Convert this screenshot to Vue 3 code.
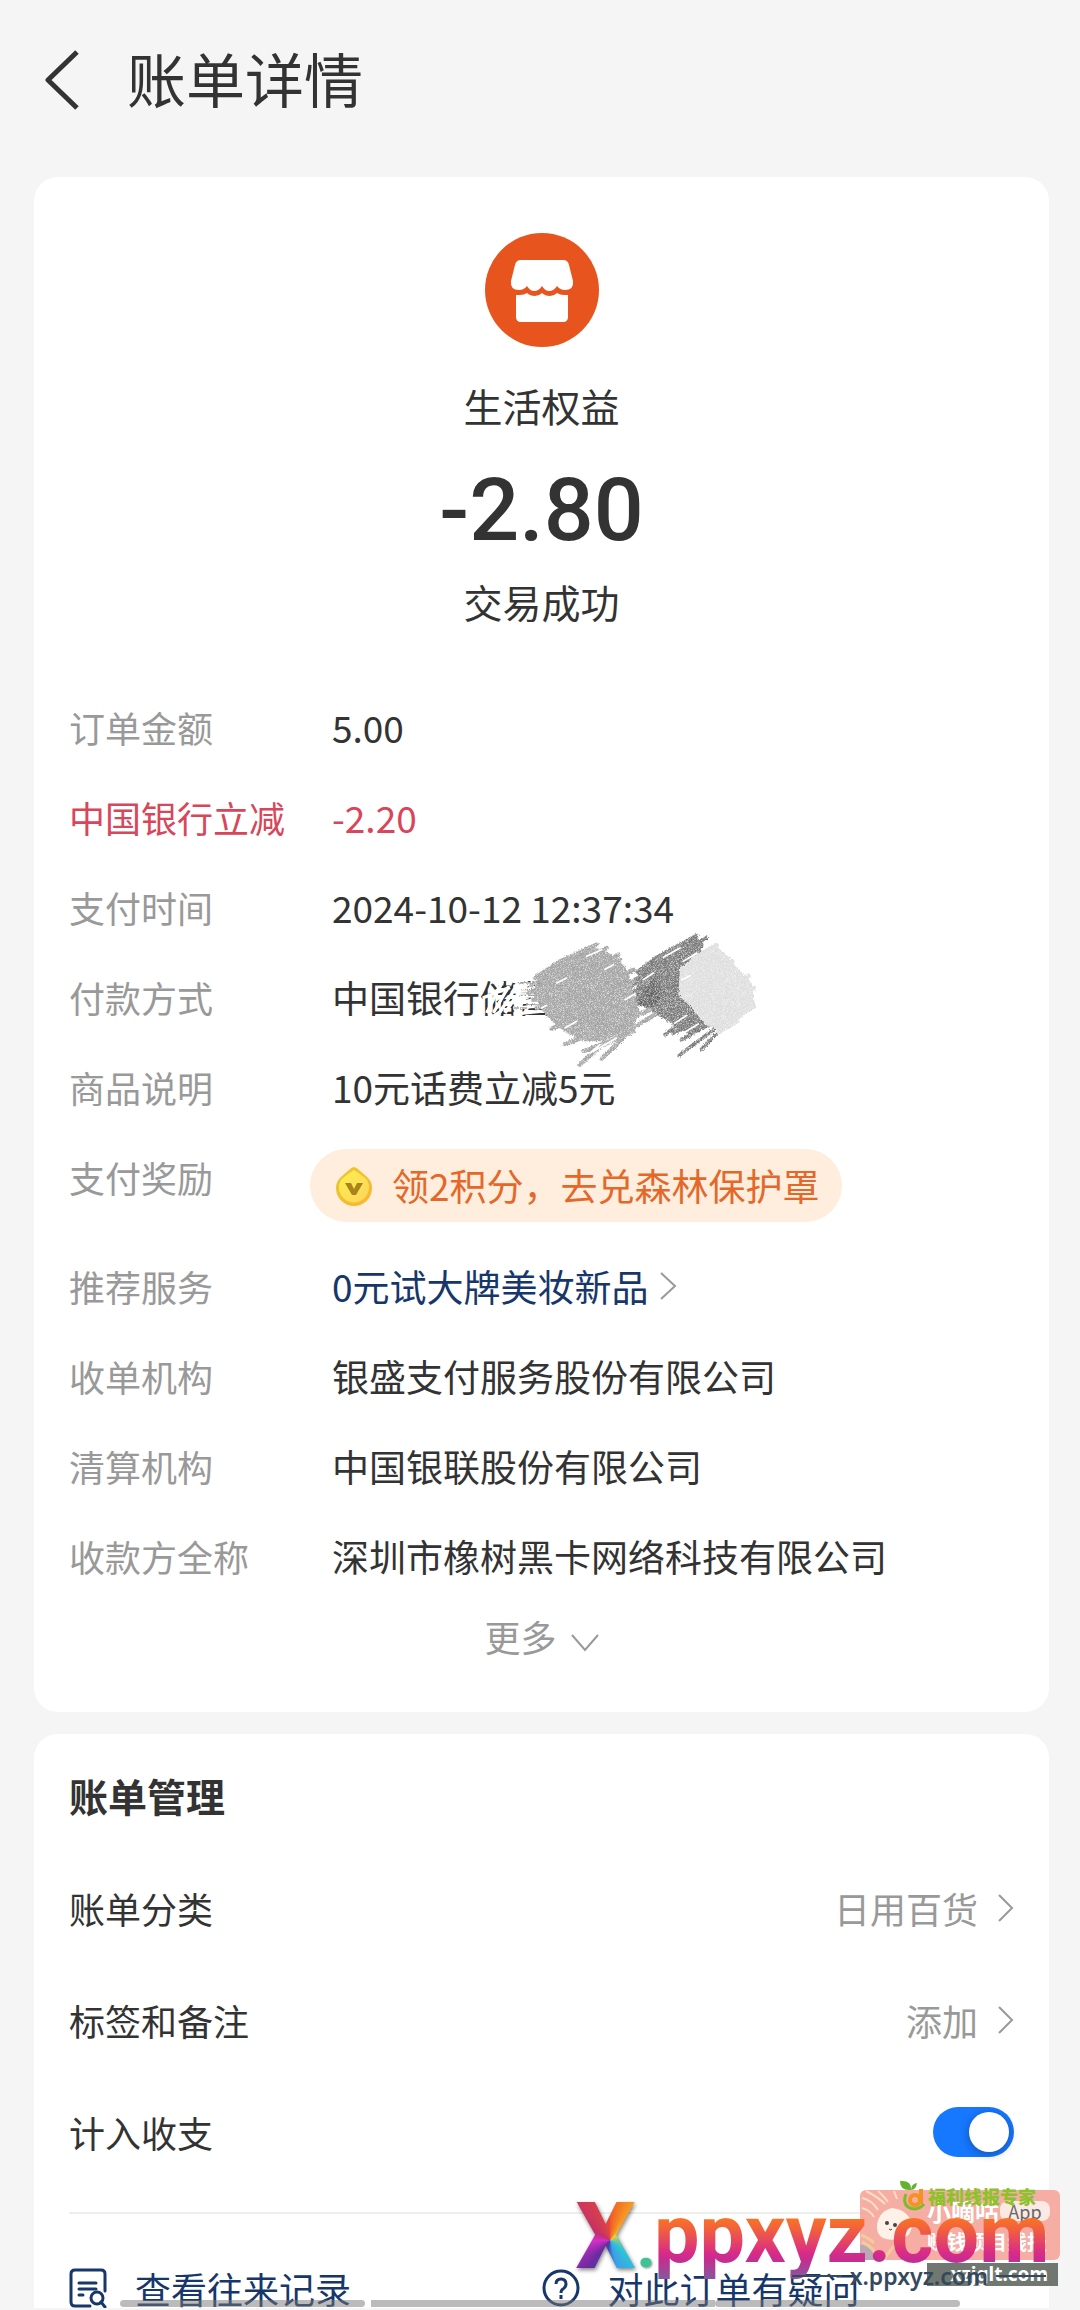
<script setup>
import { ref } from 'vue'

const counted = ref(true)

const details = [
  { label: '订单金额', value: '5.00' },
  { label: '中国银行立减', value: '-2.20', type: 'discount' },
  { label: '支付时间', value: '2024-10-12 12:37:34' },
  { label: '付款方式', value: '中国银行储蓄', type: 'masked' },
  { label: '商品说明', value: '10元话费立减5元' },
  { label: '支付奖励', value: '领2积分，去兑森林保护罩', type: 'reward' },
  { label: '推荐服务', value: '0元试大牌美妆新品', type: 'link' },
  { label: '收单机构', value: '银盛支付服务股份有限公司' },
  { label: '清算机构', value: '中国银联股份有限公司' },
  { label: '收款方全称', value: '深圳市橡树黑卡网络科技有限公司' },
]

const settings = [
  { label: '账单分类', value: '日用百货' },
  { label: '标签和备注', value: '添加' },
]
</script>

<template>
  <div class="page">
    <header class="header">
      <button class="back" aria-label="返回">
        <svg width="34" height="60" viewBox="0 0 34 60">
          <path d="M32 2 3 30 32 58" fill="none" stroke="#333" stroke-width="5" stroke-linejoin="round" />
        </svg>
      </button>
      <h1>账单详情</h1>
    </header>

    <main class="main">
      <section class="card bill">
        <div class="summary">
          <svg class="shop" width="114" height="114" viewBox="0 0 114 114">
            <circle cx="57" cy="57" r="57" fill="#e8541e" />
            <path
              d="M36 27h42q5 0 6 5l4 16q1 9-8 9-5 0-8-4-3 5-8 5-4 0-7-5-3 5-8 5-4 0-7-5-3 4-8 4-9 0-8-9l4-16q1-5 6-5z"
              fill="#fff"
            />
            <path
              d="M31 62h4q4 0 7-2 3 3 8 3 4 0 7-3 3 3 8 3 4 0 7-3 3 2 7 2h4v22q0 5-5 5H36q-5 0-5-5z"
              fill="#fff"
            />
          </svg>
          <p class="merchant">生活权益</p>
          <p class="amount">-2.80</p>
          <p class="status">交易成功</p>
        </div>

        <dl class="details">
          <div v-for="d in details" :key="d.label" class="detail" :class="d.type">
            <dt>{{ d.label }}</dt>
            <dd>
              <a v-if="d.type === 'reward'" href="#" class="pill">
                <svg width="36" height="40" viewBox="0 0 36 40">
                  <defs>
                    <linearGradient id="coin" x1="0" y1="0" x2="1" y2="1">
                      <stop offset="0" stop-color="#e8c832" />
                      <stop offset="1" stop-color="#fbb52f" />
                    </linearGradient>
                    <linearGradient id="coin-face" x1="0" y1="0" x2="1" y2="1">
                      <stop offset="0" stop-color="#fdf04e" />
                      <stop offset="1" stop-color="#fcd45c" />
                    </linearGradient>
                  </defs>
                  <path d="M18 1q2 0 5 3l7 6q6 5 6 12a18 18 0 0 1-36 0q0-7 6-12l7-6q3-3 5-3z" fill="url(#coin)" />
                  <path d="M18 4q9 6 13 10a15 15 0 1 1-26 0q4-4 13-10z" fill="url(#coin-face)" />
                  <path d="M9 17h6l3 6 3-6h6l-7 12h-4z" fill="#a8841c" />
                </svg>
                {{ d.value }}
              </a>
              <a v-else-if="d.type === 'link'" href="#" class="service">
                {{ d.value }}
                <svg width="18" height="28" viewBox="0 0 18 28">
                  <path d="M2 1 16 14 2 27" fill="none" stroke="#999" stroke-width="2" />
                </svg>
              </a>
              <template v-else>{{ d.value }}</template>

              <!-- pencil scribble hiding the card number -->
              <svg v-if="d.type === 'masked'" class="scribble" width="280" height="140" viewBox="546 90 840 420">
                <defs>
                  <filter id="pencil" x="-5%" y="-5%" width="110%" height="110%">
                    <feTurbulence type="fractalNoise" baseFrequency="0.5" numOctaves="2" seed="4" result="n" />
                    <feDisplacementMap in="SourceGraphic" in2="n" scale="12" xChannelSelector="R" yChannelSelector="G" result="s" />
                    <feColorMatrix in="n" type="matrix" values="0 0 0 0 1  0 0 0 0 1  0 0 0 0 1  1.6 0 0 0 -0.68" result="w" />
                    <feComposite in="w" in2="s" operator="in" result="g" />
                    <feMerge>
                      <feMergeNode in="s" />
                      <feMergeNode in="g" />
                    </feMerge>
                  </filter>
                </defs>
                <path
                  d="M560 345 608 250M580 345 626 265M598 345 640 280M615 345 645 300M548 300 630 268M640 250 720 240M640 265 720 254M640 282 720 270M640 298 720 288M640 315 720 304M640 332 720 322M640 348 720 340M650 345 700 250M672 348 720 260"
                  stroke="#fff" stroke-width="10" fill="none"
                />
                <g filter="url(#pencil)" fill="none" stroke-linecap="round">
                  <path d="M1190 115 1120 150 1015 220 1005 310 1060 345 1110 375 1170 410 1230 380 1150 300 1150 220 1210 145z" fill="#777" />
                  <path
                    d="M1190 112 1070 178 1012 222M1218 120 1100 190 1005 245M1205 140 1090 215 995 262M1200 160 1080 235 990 285M1190 340 1095 410M1210 360 1120 405M1225 380 1145 425M1240 395 1138 472M1245 410 1203 455"
                    stroke="#777" stroke-width="11"
                  />
                  <path d="M1060 240 1010 320 1060 330 1090 280z" fill="#5f5f5f" />
                  <path d="M885 150 780 190 712 240 700 290 725 335 760 375 800 405 850 430 910 430 1000 385 1020 340 1000 285 985 220 950 180 910 155z" fill="#a3a3a3" />
                  <path
                    d="M890 140 780 190 705 240M920 150 790 215 695 262M955 170 810 235 685 285M960 185 830 260 700 305M1000 215 850 290 710 330M1000 250 870 340 755 392M1050 335 900 400 795 438M1065 350 930 430 850 460M1000 400 900 445 840 500M1000 385 950 440 905 482"
                    stroke="#a3a3a3" stroke-width="13"
                  />
                  <path d="M680 255h45M665 275h45M660 292h50M680 320h40M640 330h40M655 254h30" stroke="#999" stroke-width="4" />
                  <path d="M1250 145 1190 170 1140 210 1135 290 1180 335 1215 380 1260 400 1330 355 1365 320 1355 255 1310 210 1290 180z" fill="#dedede" />
                  <path
                    d="M1250 142 1180 180M1295 190 1190 240M1345 235 1230 290M1362 270 1250 330M1362 325 1280 370M1310 370 1255 402"
                    stroke="#dedede" stroke-width="14"
                  />
                </g>
                <!-- paper showing between the strokes -->
                <path
                  d="M905 155 860 175M940 200 915 214M1000 290 975 305M795 390 830 370M880 460 950 420M900 440 870 465M725 330 740 322M1140 150 1090 178M1190 165 1150 190M1030 245 1060 225M1125 375 1160 352M1150 405 1195 378M1170 425 1210 400M800 240 770 255M1145 245 1170 233"
                  stroke="#fff" stroke-width="5" stroke-linecap="round"
                />
              </svg>
            </dd>
          </div>
        </dl>

        <button class="more">
          更多
          <svg width="28" height="18" viewBox="0 0 28 18">
            <path d="M1 1 14 16 27 1" fill="none" stroke="#999" stroke-width="2" />
          </svg>
        </button>
      </section>

      <section class="card manage">
        <h2>账单管理</h2>
        <button v-for="s in settings" :key="s.label" class="setting">
          <span>{{ s.label }}</span>
          <span class="setting-value">
            {{ s.value }}
            <svg width="16" height="28" viewBox="0 0 16 28">
              <path d="M1 1 14 14 1 27" fill="none" stroke="#999" stroke-width="2" />
            </svg>
          </span>
        </button>
        <label class="setting">
          <span>计入收支</span>
          <input v-model="counted" type="checkbox" class="switch" />
        </label>

        <nav class="links">
          <a href="#">
            <svg width="38" height="40" viewBox="0 0 38 40" fill="none" stroke="#17376b" stroke-width="3" stroke-linecap="round">
              <path d="M21 38H6q-4 0-4-4V6q0-4 4-4h26q4 0 4 4v17M10 15h17M10 21h17M10 27h4" />
              <circle cx="28" cy="30" r="6" />
              <path d="m32 34 4 5" />
            </svg>
            查看往来记录
          </a>
          <a href="#">
            <svg width="38" height="40" viewBox="0 0 38 40" fill="none" stroke="#17376b" stroke-width="3">
              <circle cx="19" cy="20" r="17" />
              <path d="M14 16q0-5 5-5t5 5q0 3-3 5-2 1-2 4M19 27v4" />
            </svg>
            对此订单有疑问
          </a>
        </nav>
      </section>
    </main>

    <div class="bars" aria-hidden="true"><i></i><i></i><i></i></div>

    <div class="watermark" aria-hidden="true">
      <div class="badge">
        <svg class="badge-art" width="70" height="70" viewBox="0 0 70 70">
          <path d="M2 8q10 2 16 12M6 1q12 6 19 13M18 1q5 4 10 11M2 18q8 2 12 9M34 1l3 8" stroke="#f8dfc0" stroke-width="2" fill="none" />
          <path d="M0 55q14 0 20 15H0z" fill="#b9a9b4" />
          <path d="M1 45q8 3 13 8M2 52q12 5 16 17M24 70q6-10 10-14 6 8 13 14" stroke="#f2cc9c" stroke-width="3" fill="none" />
          <path d="M17 35q2-14 15-17 17 2 20 17-1 11-8 12-12 5-21 1-7-4-6-13z" fill="#fdf1e8" />
          <circle cx="27" cy="33" r="2" fill="#444" />
          <circle cx="35" cy="35" r="2" fill="#444" />
          <path d="M29 39q2 2 3 0" stroke="#444" fill="none" />
        </svg>
        <span class="badge-name">小嘀咕</span>
        <span class="badge-app">App</span>
        <span class="badge-note">赚钱项目线报</span>
      </div>
      <div class="expert">
        <svg width="28" height="32" viewBox="0 0 28 32">
          <path d="M12 10Q1 11 1 1q12-1 11 9zM12 10q0-6 6-7-1 7-6 7z" fill="#64b32e" />
          <path d="M7 14q-4 10 4 14 8 3 14-4" fill="none" stroke="#7cbb2c" stroke-width="3" />
          <circle cx="16" cy="20" r="5" fill="none" stroke="#f39321" stroke-width="4" />
          <path d="M22 9v15" stroke="#f39321" stroke-width="4" />
        </svg>
        福利线报专家
      </div>
      <span class="big-x">X</span>
      <span class="big-dot">.</span>
      <span class="big-domain">ppxyz.com</span>
      <span class="forum">xzjglt.com</span>
      <span class="small-domain">x.ppxyz.com</span>
    </div>
  </div>
</template>

<style>
body {
  margin: 0;
  background: #f5f5f5;
}
</style>

<style scoped>
.page {
  position: relative;
  min-height: 100vh;
  overflow: hidden;
  background: #f5f5f5;
  color: #333;
  font-family: "Noto Sans CJK SC", sans-serif;
  font-size: 36px;
}
h1, h2, p, dl, dd {
  margin: 0;
}
button {
  padding: 0;
  border: 0;
  background: none;
  color: inherit;
  font: inherit;
  cursor: pointer;
}
a {
  color: #17376b;
  text-decoration: none;
}
svg {
  flex-shrink: 0;
}

.header {
  display: flex;
  align-items: flex-start;
  gap: 48px;
  height: 110px;
  padding: 50px 45px 0;
}
.back {
  display: flex;
}
.header h1 {
  font-size: 59px;
  font-weight: 400;
  line-height: 56px;
}

.main {
  display: flex;
  flex-direction: column;
  gap: 22px;
  padding: 17px 31px 0 34px;
}
.card {
  padding: 0 35px;
  border-radius: 24px;
  background: #fff;
}
.bill {
  padding-top: 56px;
  padding-bottom: 41px;
}
.summary {
  display: flex;
  flex-direction: column;
  align-items: center;
  padding-bottom: 51px;
}
.merchant, .status {
  font-size: 39px;
  line-height: 60px;
}
.merchant {
  margin-top: 28px;
}
.amount {
  margin: 30px 0 16px;
  font-family: Roboto, sans-serif;
  font-size: 88px;
  font-weight: 500;
  line-height: 90px;
}

.detail {
  display: grid;
  grid-template-columns: 263px 1fr;
  min-height: 90px;
  line-height: 90px;
}
.detail dt {
  color: #999;
}
.detail dd {
  position: relative;
  font-size: 37px;
}
.discount dt, .discount dd {
  color: #d8465a;
}
.reward {
  min-height: 109px;
}
.pill {
  display: inline-flex;
  align-items: center;
  gap: 20px;
  height: 73px;
  margin: 17px 0 0 -22px;
  padding: 0 22px 0 26px;
  border-radius: 37px;
  background: #ffeedd;
  color: #e3682a;
  line-height: 73px;
}
.service {
  display: flex;
  align-items: center;
  gap: 10px;
}
.scribble {
  position: absolute;
  top: -24px;
  left: 150px;
}
.more {
  display: flex;
  align-items: baseline;
  justify-content: center;
  gap: 14px;
  width: 100%;
  color: #999;
  line-height: 70px;
}

.manage {
  padding-top: 31px;
  border-radius: 24px 24px 0 0;
}
.manage h2 {
  margin-bottom: 27px;
  font-size: 39px;
  font-weight: 700;
  line-height: 60px;
}
.setting {
  display: flex;
  align-items: center;
  justify-content: space-between;
  width: 100%;
  height: 112px;
}
.setting-value {
  display: flex;
  align-items: center;
  gap: 20px;
  color: #999;
}
.switch {
  display: flex;
  align-items: center;
  justify-content: flex-start;
  width: 81px;
  height: 50px;
  margin: 0;
  padding: 5px;
  box-sizing: border-box;
  border-radius: 25px;
  background: #ccc;
  appearance: none;
}
.switch::before {
  width: 40px;
  height: 40px;
  border-radius: 50%;
  background: #fff;
  box-shadow: 0 2px 10px rgba(0, 0, 0, 0.3);
  content: "";
}
.switch:checked {
  justify-content: flex-end;
  background: #1677ff;
}
.links {
  display: grid;
  grid-template-columns: 1fr 1fr;
  margin-top: 24px;
  padding-top: 54px;
  border-top: 2px solid #eee;
}
.links a {
  display: flex;
  align-items: center;
  gap: 28px;
  height: 40px;
  line-height: 40px;
  white-space: nowrap;
}

.bars {
  position: absolute;
  right: 120px;
  bottom: 3px;
  left: 120px;
  display: grid;
  grid-template-columns: 245px 1fr 245px;
  height: 7px;
}
.bars i {
  border-radius: 4px;
  background: rgba(120, 120, 120, 0.5);
}
.bars i:nth-child(2) {
  margin-left: 6px;
  border-radius: 0;
}

/* site watermark stuck to the bottom right corner */
.watermark {
  position: absolute;
  right: 20px;
  bottom: 0;
  width: 490px;
  height: 130px;
  line-height: 1;
  pointer-events: none;
}
.watermark > * {
  position: absolute;
  white-space: nowrap;
}
.badge {
  top: 10px;
  right: 0;
  width: 200px;
  height: 70px;
  border-radius: 6px;
  background: rgba(244, 166, 156, 0.92);
  color: #fff;
  overflow: hidden;
}
.badge span, .badge-art {
  position: absolute;
}
.badge-art {
  top: 0;
  left: 0;
}
.badge-name {
  top: 9px;
  left: 67px;
  font-size: 24px;
  font-weight: 700;
}
.badge-app {
  top: 11px;
  right: 10px;
  width: 50px;
  border-radius: 8px;
  background: #fde9e4;
  color: #666;
  font-size: 18px;
  line-height: 20px;
  text-align: center;
}
.badge-note {
  top: 42px;
  left: 67px;
  font-size: 20px;
  font-weight: 700;
}
.expert {
  top: 0;
  left: 329px;
  display: flex;
  align-items: center;
  gap: 1px;
  color: #8cc22c;
  font-size: 18px;
  font-weight: 900;
}
.big-x {
  top: 10px;
  left: 6px;
  background: conic-gradient(from 0deg at 58% 54%, #ef5a28, #f6a021 35deg, #e9d23c 45deg, #2ec4d6 130deg, #3aa0e8 165deg, #3b4ab0 190deg, #6a2aa0 220deg, #d62fc8 268deg, #c22f6a 300deg, #e5483a);
  background-clip: text;
  color: transparent;
  filter: drop-shadow(1px 2px 2px rgba(0, 0, 0, 0.5));
  font: 900 93px/93px Roboto, sans-serif;
}
.big-dot {
  top: 37px;
  left: 67px;
  color: #3fc295;
  filter: drop-shadow(1px 1px 1px rgba(0, 0, 0, 0.4));
  font: 900 60px/60px Roboto, sans-serif;
}
.big-domain {
  top: 7px;
  left: 84px;
  background: linear-gradient(#fb7a1e 28px, #f2603c 42px, #d92b88 66px, #c82c90 72px, #8a559b 90px);
  background-clip: text;
  color: transparent;
  font: 700 81px/95px Roboto, sans-serif;
}
.forum {
  right: 2px;
  bottom: 24px;
  box-sizing: border-box;
  width: 131px;
  padding-right: 10px;
  background: rgba(88, 96, 88, 0.85);
  color: #fff;
  font: 700 19px/23px "Noto Sans", sans-serif;
  text-align: right;
}
.small-domain {
  right: 14px;
  bottom: 21px;
  display: flex;
  align-items: center;
  gap: 8px;
  color: #35495e;
  font: 600 23px/26px "Noto Sans", sans-serif;
}
.small-domain::before, .small-domain::after {
  width: 50px;
  height: 2px;
  background: #35495e;
  content: "";
}
</style>
